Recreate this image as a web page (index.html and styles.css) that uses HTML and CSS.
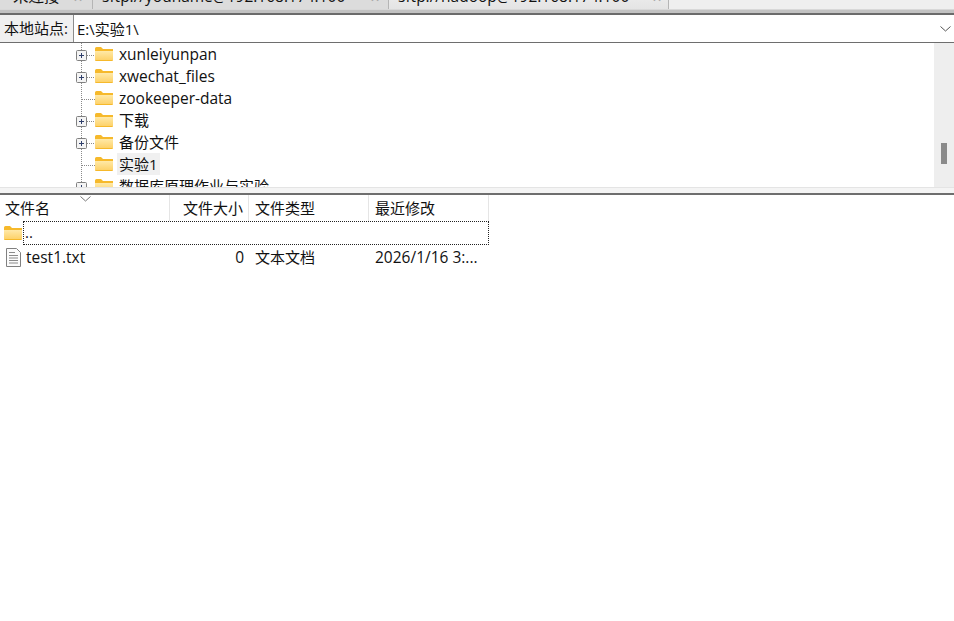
FILE: index.html
```html
<!DOCTYPE html>
<html>
<head>
  <title>FileZilla</title>
  <link rel="stylesheet" href="styles.css">
</head>
<body>
  <svg class="defs" width="0" height="0">
    <defs>
      <linearGradient id="folderFill" x1="0" y1="0" x2="0" y2="1">
        <stop offset="0" stop-color="#ffe9a8"/>
        <stop offset="1" stop-color="#fdd26a"/>
      </linearGradient>
      <symbol id="folder" viewBox="0 0 18 14">
        <path d="M0 1.5 Q0 0 1.5 0 H6 L8 2 H18 V13 Q18 14 17 14 H1 Q0 14 0 13 Z" fill="#f6b92b"/>
        <path d="M0 4 H18 V12.5 Q18 13 17.5 13 H0.5 Q0 13 0 12.5 Z" fill="url(#folderFill)"/>
      </symbol>
      <symbol id="branch" viewBox="0 0 19 22">
        <path d="M5.5 0 V22" stroke="#8a8a8a" stroke-dasharray="1 1" fill="none"/>
        <path d="M6 12.5 H19" stroke="#8a8a8a" stroke-dasharray="1 1" fill="none"/>
      </symbol>
      <symbol id="expander" viewBox="0 0 19 22">
        <path d="M5.5 0 V22" stroke="#8a8a8a" stroke-dasharray="1 1" fill="none"/>
        <path d="M11 12.5 H19" stroke="#8a8a8a" stroke-dasharray="1 1" fill="none"/>
        <rect x="0.5" y="7.5" width="10" height="10" rx="1" fill="#f4f4f4" stroke="#808080"/>
        <path d="M3 12.5 H8 M5.5 10 V15" stroke="#2f3f6b" fill="none"/>
      </symbol>
    </defs>
  </svg>

  <div class="tabbar">
    <div class="tab tab-first"><span class="tab-title">未连接</span><span class="tab-close">✕</span></div>
    <div class="tab tab-second"><span class="tab-title">sftp://youname@192.168.174.100</span><span class="tab-close">✕</span></div>
    <div class="tab tab-active"><span class="tab-title">sftp://hadoop@192.168.174.100</span><span class="tab-close">✕</span></div>
  </div>
  <div class="rule-thick"></div>

  <div class="site-row">
    <label class="site-label">本地站点:</label>
    <div class="site-input">
      <span>E:\实验1\</span>
      <svg class="site-arrow" width="11" height="6" viewBox="0 0 11 6"><path d="M0.5 0.5 L5.5 5 L10.5 0.5" fill="none" stroke="#555"/></svg>
    </div>
  </div>

  <div class="tree-pane">
    <div class="tree">
      <div class="tree-row"><svg class="conn"><use href="#expander"/></svg><svg class="folder"><use href="#folder"/></svg><span class="tree-name latin">xunleiyunpan</span></div>
      <div class="tree-row"><svg class="conn"><use href="#expander"/></svg><svg class="folder"><use href="#folder"/></svg><span class="tree-name latin">xwechat_files</span></div>
      <div class="tree-row"><svg class="conn"><use href="#branch"/></svg><svg class="folder"><use href="#folder"/></svg><span class="tree-name latin">zookeeper-data</span></div>
      <div class="tree-row"><svg class="conn"><use href="#expander"/></svg><svg class="folder"><use href="#folder"/></svg><span class="tree-name">下载</span></div>
      <div class="tree-row"><svg class="conn"><use href="#expander"/></svg><svg class="folder"><use href="#folder"/></svg><span class="tree-name">备份文件</span></div>
      <div class="tree-row"><svg class="conn"><use href="#branch"/></svg><svg class="folder"><use href="#folder"/></svg><span class="tree-name selected">实验1</span></div>
      <div class="tree-row"><svg class="conn"><use href="#expander"/></svg><svg class="folder"><use href="#folder"/></svg><span class="tree-name">数据库原理作业与实验</span></div>
    </div>
    <div class="scrollbar"><div class="scroll-thumb"></div></div>
  </div>
  <div class="rule-band"></div>

  <div class="file-list">
    <div class="list-head">
      <div class="col col-name">文件名</div>
      <div class="col col-size">文件大小</div>
      <div class="col col-type">文件类型</div>
      <div class="col col-date">最近修改</div>
      <svg class="sort-arrow" width="11" height="6" viewBox="0 0 11 6"><path d="M0.5 0.5 L5.5 5 L10.5 0.5" fill="none" stroke="#777"/></svg>
    </div>
    <div class="list-row row-parent">
      <svg class="row-folder"><use href="#folder"/></svg>
      <div class="parent-name">..</div>
    </div>
    <div class="list-row row-file">
      <svg class="doc" width="15" height="19" viewBox="0 0 15 19">
        <path d="M0.5 0.5 H10.5 L14.5 4.5 V18.5 H0.5 Z" fill="#fbfbfb" stroke="#808080"/>
        <path d="M3 4.5 H9 M3 7.5 H12 M3 10 H12 M3 12.5 H12 M3 15 H12" stroke="#8a8a8a" fill="none"/>
      </svg>
      <div class="col-name cell-name latin">test1.txt</div>
      <div class="col-size cell-size latin">0</div>
      <div class="col-type cell-type">文本文档</div>
      <div class="col-date cell-date latin">2026/1/16 3:...</div>
    </div>
  </div>
</body>
</html>
```
FILE: styles.css
```css
body {
  margin: 0;
  background: white;
  color: #111;
  font-family: "Open Sans", "Noto Sans CJK SC", sans-serif;
  font-size: 15px;
  overflow: hidden;
}
.defs {
  display: block;
  height: 0;
}
.latin {
  font-size: 15.5px;
}

/* tabs, only the bottom of them is on screen */
.tabbar {
  display: flex;
  align-items: flex-end;
  height: 9px;
  overflow: hidden;
  background: #efefef;
}
.tab {
  display: flex;
  flex: none;
  align-items: center;
  justify-content: space-between;
  box-sizing: border-box;
  height: 24px;
  padding-bottom: 2px;
  border-right: 1px solid #b5b5b5;
  line-height: 16px;
  white-space: nowrap;
}
.tab-title {
  font-size: 15.5px;
}
.tab-first {
  width: 93px;
  padding-left: 13px;
  padding-right: 9px;
  background: #dcdcdc;
}
.tab-second {
  width: 296px;
  padding-left: 9px;
  padding-right: 8px;
  background: #dcdcdc;
}
.tab-active {
  width: 280px;
  padding-left: 9px;
  padding-right: 6px;
  background: linear-gradient(#f2f2f2, #e4e4e4);
}
.tab-close {
  align-self: flex-end;
  margin-bottom: 3px;
  color: #a5a5a5;
  font-size: 12px;
  line-height: 12px;
}
.rule-thick {
  height: 3px;
  background: #c2c2c2;
  border-top: 1px solid #d8d8d8;
  border-bottom: 2px solid #6b6b6b;
}

/* local site row */
.site-row {
  display: flex;
  height: 27px;
  border-bottom: 1px solid #6e6e6e;
}
.site-label {
  box-sizing: border-box;
  width: 73px;
  padding-left: 4px;
  background: #f0f0f0;
  line-height: 27px;
  white-space: nowrap;
}
.site-input {
  display: flex;
  flex: 1;
  align-items: center;
  justify-content: space-between;
  padding: 0 3px 0 3px;
  border-left: 1px solid #8c8c8c;
}

/* directory tree */
.tree-pane {
  display: flex;
  height: 144px;
}
.tree {
  flex: 1;
  padding-left: 76px;
  overflow: hidden;
}
.tree-row {
  display: flex;
  align-items: center;
  height: 22px;
}
.conn {
  flex: none;
  width: 19px;
  height: 22px;
}
.folder {
  flex: none;
  width: 18px;
  height: 14px;
  margin-right: 4px;
}
.tree-name {
  padding: 0 2px;
  line-height: 22px;
  white-space: nowrap;
}
.selected {
  background: #f0f0f0;
}
.scrollbar {
  flex: none;
  box-sizing: border-box;
  width: 20px;
  padding: 100px 7px 0 7px;
  background: #eeeeee;
}
.scroll-thumb {
  height: 21px;
  background: #8a8a8a;
}
.rule-band {
  height: 5px;
  background: #f4f4f4;
  border-top: 1px solid #e4e4e4;
  border-bottom: 2px solid #6e6e6e;
}

/* file list */
.file-list {
  width: 489px;
}
.list-head {
  position: relative;
  display: flex;
  height: 26px;
  line-height: 26px;
}
.col {
  box-sizing: border-box;
  border-right: 1px solid #e5e5e5;
}
.col-name {
  box-sizing: border-box;
  width: 170px;
  padding-left: 5px;
}
.col-size {
  box-sizing: border-box;
  width: 79px;
  padding-right: 5px;
  text-align: right;
}
.col-type {
  box-sizing: border-box;
  width: 120px;
  padding-left: 6px;
}
.col-date {
  box-sizing: border-box;
  width: 120px;
  padding-left: 6px;
}
.sort-arrow {
  position: absolute;
  top: 1px;
  left: 80px;
}
.list-row {
  display: flex;
  align-items: center;
}
.row-parent {
  height: 24px;
}
.row-folder {
  flex: none;
  width: 18px;
  height: 14px;
  margin: 0 1px 0 4px;
}
.parent-name {
  flex: 1;
  box-sizing: border-box;
  height: 24px;
  padding-left: 1px;
  border: 1px dotted #222;
  line-height: 20px;
}
.row-file {
  height: 24px;
}
.doc {
  flex: none;
  margin: 0 5px 0 6px;
}
.cell-name {
  width: 144px;
  padding-left: 0;
}
.cell-type {
  margin-bottom: 2px;
}
.cell-date {
  white-space: nowrap;
}
```
